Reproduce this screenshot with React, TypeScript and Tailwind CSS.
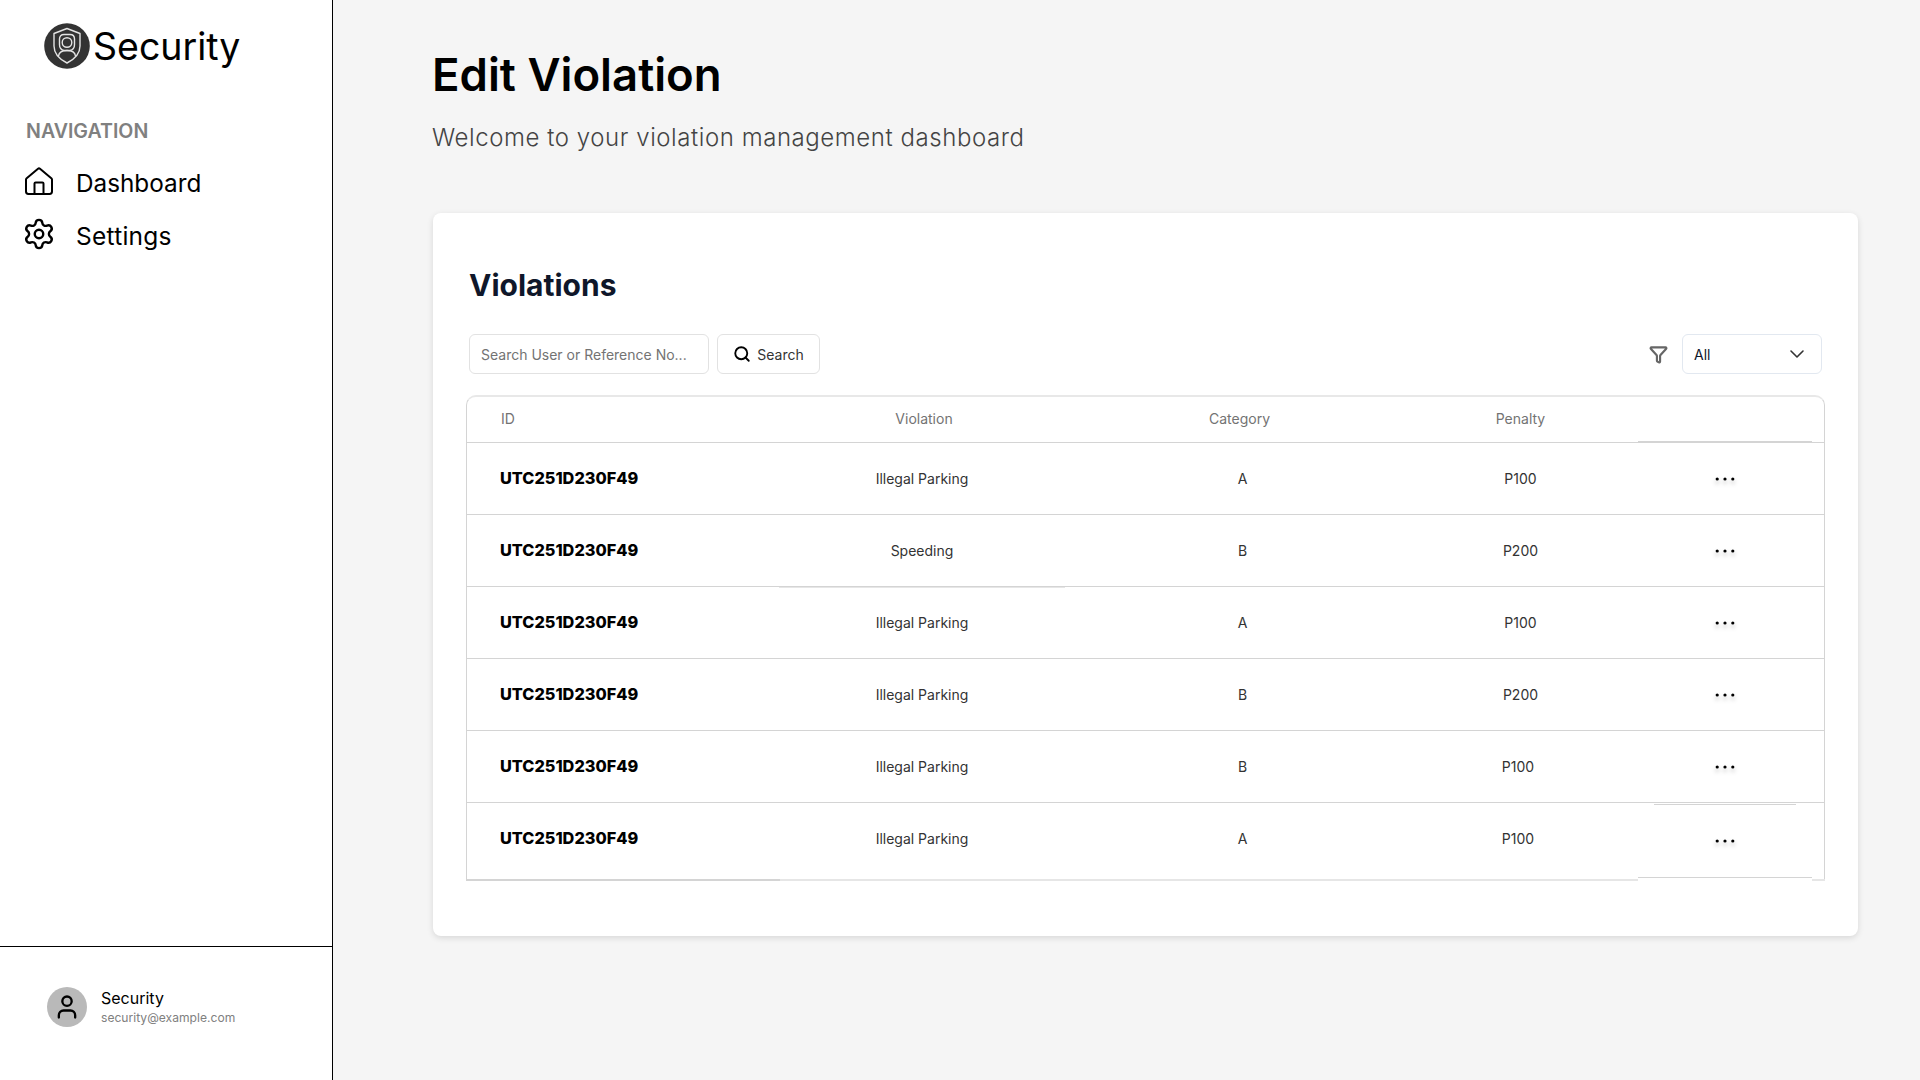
import { Settings, Search, Funnel, ChevronDown, User } from "lucide-react";

const rows = [
  { v: "Illegal Parking", c: "A", p: "P100", pShift: false },
  { v: "Speeding", c: "B", p: "P200", pShift: false },
  { v: "Illegal Parking", c: "A", p: "P100", pShift: false },
  { v: "Illegal Parking", c: "B", p: "P200", pShift: false },
  { v: "Illegal Parking", c: "B", p: "P100", pShift: true },
  { v: "Illegal Parking", c: "A", p: "P100", pShift: true },
];

function Logo() {
  return (
    <svg width="46" height="46" viewBox="0 0 46 46" className="shrink-0">
      <circle cx="23" cy="23" r="22.8" fill="#333333" />
      <path d="M23 5.500 L36 10.500 V23 C36 31 30 36.500 23 40 C16 36.500 10 31 10 23 V10.500 Z" fill="none" stroke="#e4e4e4" strokeWidth="1.400" strokeLinejoin="round" />
      <path d="M20 11.500 H26 C29 11.500 30.500 13 30.500 16 V21.500 C30.500 25 28.500 27 26 27.500 H20 C17.500 27 15.500 25 15.500 21.500 V16 C15.500 13 17 11.500 20 11.500 Z" fill="none" stroke="#e4e4e4" strokeWidth="1.400" />
      <circle cx="23" cy="19.500" r="4.800" fill="none" stroke="#e4e4e4" strokeWidth="1.400" />
      <path d="M14.500 33 C15 29 18.500 27.500 23 27.500 C27.500 27.500 31 29 31.500 33" fill="none" stroke="#e4e4e4" strokeWidth="1.400" />
    </svg>
  );
}

function HomeIcon() {
  return (
    <svg width="30" height="28" viewBox="0 0 30 28" fill="none" stroke="#000" strokeWidth="2" strokeLinejoin="round" className="-mt-[4px] shrink-0">
      <path d="M2 12.500 C2 12 2.300 11.600 2.700 11.200 L14 1.800 C14.600 1.300 15.400 1.300 16 1.800 L27.300 11.200 C27.700 11.600 28 12 28 12.500 V24.500 C28 25.900 27 26.900 25.600 26.900 H4.400 C3 26.900 2 25.900 2 24.500 Z" />
      <path d="M10.500 26.900 V16.500 C10.500 15.900 11 15.400 11.600 15.400 H18.400 C19 15.400 19.500 15.900 19.500 16.500 V26.900" />
    </svg>
  );
}

function Dots() {
  return (
    <svg width="20" height="10" viewBox="0 0 20 10" className="drop-shadow-[0_3px_2px_rgba(0,0,0,0.3)]">
      <circle cx="2.200" cy="5" r="1.600" fill="#000" />
      <circle cx="10" cy="5" r="1.600" fill="#000" />
      <circle cx="17.800" cy="5" r="1.600" fill="#000" />
    </svg>
  );
}

export default function App() {
  return (
    <div className="flex h-[1080px] w-[1920px] overflow-hidden bg-[#f5f5f5] font-['Inter',sans-serif] text-black">
      <aside className="flex w-[333px] shrink-0 flex-col border-r border-black bg-white">
        <div className="flex flex-1 flex-col">
          <div className="flex items-center gap-[3px] pl-[44px] pt-[23px]">
            <Logo />
            <span className="pt-[1px] text-[37.5px] leading-[45px]">Security</span>
          </div>
          <div className="pl-[26px] pt-[46px] text-[19.6px] font-semibold leading-[32px] text-[#808080]">NAVIGATION</div>
          <nav className="mt-[16px] flex flex-col gap-[13px] pl-[24px]">
            <div className="flex h-[40px] items-center gap-[22px]">
              <HomeIcon />
              <span className="text-[24.3px]">Dashboard</span>
            </div>
            <div className="-ml-[2px] flex h-[40px] items-center gap-[20px]">
              <Settings size={34} strokeWidth={1.7} className="-mt-[4px]" />
              <span className="text-[24.5px] tracking-[0.01em]">Settings</span>
            </div>
          </nav>
        </div>
        <div className="flex h-[134px] items-center gap-[14px] border-t border-black pb-[14px] pl-[47px]">
          <div className="mt-[1px] flex h-[40px] w-[40px] items-center justify-center rounded-full bg-[#b9b9b9]">
            <User size={28} strokeWidth={2} />
          </div>
          <div className="flex flex-col pt-[1px]">
            <span className="text-[16px] leading-[20px]">Security</span>
            <span className="pt-[1px] text-[12.1px] leading-[18px] text-[#808080]">security@example.com</span>
          </div>
        </div>
      </aside>

      <main className="flex-1 pl-[99px] pr-[61px] pt-[46px]">
        <h1 className="text-[45.5px] font-semibold leading-[58px]">Edit Violation</h1>
        <p className="mt-[18px] text-[24px] font-light leading-[32px] tracking-[0.56px] text-[#444444]">Welcome to your violation management dashboard</p>

        <section className="ml-[1px] mt-[59px] h-[723px] w-[1425px] rounded-[8px] bg-white pl-[32px] pr-[33px] pt-[54px] shadow-[0_2px_6px_rgba(0,0,0,0.12)]">
          <h2 className="pl-[4px] text-[30px] font-bold leading-[37px] text-[#0f172a]">Violations</h2>
          <div className="mt-[30px] flex items-center justify-between pl-[4px] pr-[3px]">
            <div className="flex items-center gap-[8px]">
              <div className="flex h-[40px] w-[240px] items-center rounded-[6px] border border-[#e2e2e2] pl-[11px] text-[14px] text-[#737373]">Search User or Reference No...</div>
              <div className="flex h-[40px] w-[103px] items-center justify-center gap-[6px] rounded-[6px] border border-[#e2e2e2] text-[14px] text-[#333333]">
                <Search size={18} strokeWidth={2.5} className="text-black" />
                Search
              </div>
            </div>
            <div className="flex items-center gap-[14px]">
              <Funnel size={19} strokeWidth={2.7} className="text-[#666666]" />
              <div className="flex h-[40px] w-[140px] items-center justify-between rounded-[6px] border border-[#e2e8f0] pl-[11px] pr-[12px] text-[14px] text-[#0f172a]">
                All
                <ChevronDown size={24} strokeWidth={1.6} className="text-[#333333]" />
              </div>
            </div>
          </div>

          <div className="relative ml-[1px] mt-[21px] h-[486px] w-[1359px] rounded-t-[10px] border-x border-t-2 border-x-[#d4d4d4] border-t-[#e8e8e8]">
            <div className="grid h-[45px] grid-cols-[312px_286px_337px_236px_174px_1fr] items-center text-[14px] text-[#737373]">
              <div className="pb-[2px] pl-[34px]">ID</div>
              <div className="pb-[2px] pl-[4px] text-center">Violation</div>
              <div className="pb-[2px] pl-[16px] pr-[4px] text-center">Category</div>
              <div className="pb-[2px] pl-[1px] text-center">Penalty</div>
              <div className="h-full border-b border-[#d4d4d4]" />
              <div />
            </div>
            {rows.map((r, i) => (
              <div key={i} className="grid h-[72px] grid-cols-[312px_286px_337px_236px_174px_1fr] items-center border-t border-[#d4d4d4]">
                <div className="pl-[33px] text-[16.3px] font-extrabold">UTC251D230F49</div>
                <div className="text-center text-[14px] text-[#333333]">{r.v}</div>
                <div className="pl-[18px] text-center text-[14px] text-[#333333]">{r.c}</div>
                <div className={`text-center text-[14px] text-[#333333] ${r.pShift ? "pr-[4px]" : "pl-[1px]"}`}>{r.p}</div>
                <div className={`flex justify-center ${i === 5 ? "pt-[4px]" : ""}`}><Dots /></div>
                <div />
              </div>
            ))}
            <div className="absolute bottom-0 left-[-1px] right-[-1px] h-[2px] bg-[#e6e6e6]" />
            <div className="absolute bottom-0 left-[-1px] h-[2px] w-[314px] bg-[#d4d4d4]" />
            <div className="absolute bottom-0 left-[1171px] h-[2px] w-[174px] bg-white" />
            <div className="absolute bottom-[3px] left-[1171px] h-px w-[174px] bg-[#d4d4d4]" />
            <div className="absolute left-[312px] top-[190px] h-px w-[286px] bg-[#e6e6e6]" />
            <div className="absolute left-[1187px] top-[407px] h-px w-[142px] bg-[#d4d4d4]" />
          </div>
        </section>
      </main>
    </div>
  );
}
